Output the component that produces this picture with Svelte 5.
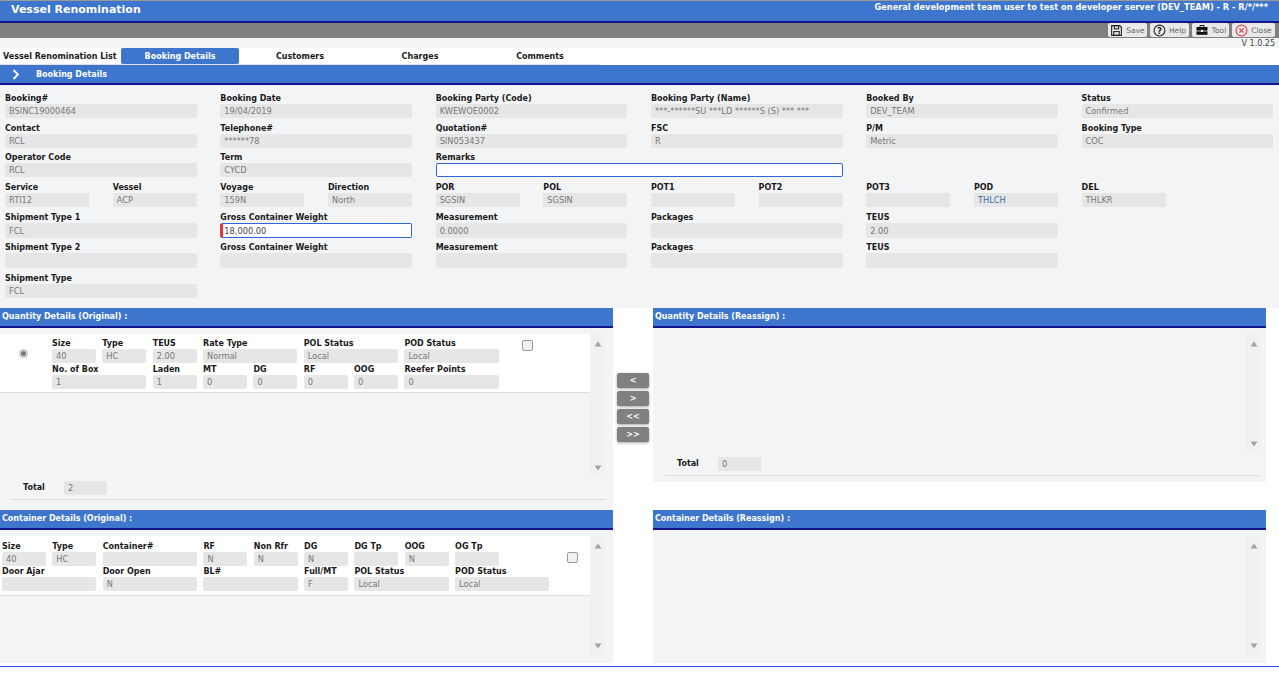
<script>
  const tabs = ['Customers', 'Charges', 'Comments'];
  const rows = [
    [['Booking#','BSINC19000464',2],['Booking Date','19/04/2019',2],['Booking Party (Code)','KWEWOE0002',2],['Booking Party (Name)','***-******SU ***LD ******S (S) *** ***',2],['Booked By','DEV_TEAM',2],['Status','Confirmed',2]],
    [['Contact','RCL',2],['Telephone#','******78',2],['Quotation#','SIN053437',2],['FSC','R',2],['P/M','Metric',2],['Booking Type','COC',2]],
    [['Operator Code','RCL',2],['Term','CYCD',2]],
    [['Service','RTI12',1],['Vessel','ACP',1],['Voyage','159N',1],['Direction','North',1],['POR','SGSIN',1],['POL','SGSIN',1],['POT1','',1],['POT2','',1],['POT3','',1],['POD','THLCH',1],['DEL','THLKR',1]],
  ];
  const lower = [['Shipment Type 2',''],['Gross Container Weight',''],['Measurement',''],['Packages',''],['TEUS','']];
  const qty = [
    ['Size','40',1],['Type','HC',1],['TEUS','2.00',1],['Rate Type','Normal',2],['POL Status','Local',2],['POD Status','Local',2],
    ['No. of Box','1',2],['Laden','1',1],['MT','0',1],['DG','0',1],['RF','0',1],['OOG','0',1],['Reefer Points','0',2],
  ];
  const cont = [
    ['Size','40',1],['Type','HC',1],['Container#','',2],['RF','N',1],['Non Rfr','N',1],['DG','N',1],['DG Tp','',1],['OOG','N',1],['OG Tp','',1],['','',1],
    ['Door Ajar','',2],['Door Open','N',2],['BL#','',2],['Full/MT','F',1],['POL Status','Local',2],['POD Status','Local',2],
  ];
</script>

{#snippet field(label, value, span, cls = '')}
  <div class="field {cls}" style="grid-column: span {span}">
    <span class="lbl">{label}</span>
    <div class="val">{value}</div>
  </div>
{/snippet}

{#snippet scrollbar()}
  <div class="scroll">
    <svg width="8" height="6" viewBox="0 0 8 6"><path d="M4 0.5 L7.5 5.5 H0.5 Z" /></svg>
    <svg width="8" height="6" viewBox="0 0 8 6"><path d="M4 5.5 L7.5 0.5 H0.5 Z" /></svg>
  </div>
{/snippet}

<div class="page">
  <header class="title">
    <h1>Vessel Renomination</h1>
    <span class="user">General development team user to test on developer server (DEV_TEAM) - R - R/*/***</span>
  </header>

  <div class="toolbar">
    <button class="tbtn">
      <svg width="13" height="13" viewBox="0 0 12 12" fill="none" stroke="#222" stroke-width="1"><path d="M1.5 1.5h7.5l1.5 1.5v7.5h-9z"/><rect x="4" y="1.5" width="4" height="3"/><rect x="3.5" y="7" width="5" height="3.5"/></svg>
      Save
    </button>
    <button class="tbtn">
      <svg width="13" height="13" viewBox="0 0 12 12" fill="none" stroke="#222" stroke-width="1"><circle cx="6" cy="6" r="5"/><text x="6" y="9" font-size="8" font-weight="700" text-anchor="middle" fill="#222" stroke="none" font-family="DejaVu Sans">?</text></svg>
      Help
    </button>
    <button class="tbtn tool">
      <svg width="14" height="12" viewBox="0 0 13 12"><path d="M4.5 3V1.5h4V3" fill="none" stroke="#111" stroke-width="1"/><rect x="1" y="3" width="11" height="3.6" fill="#111"/><rect x="1" y="7.4" width="11" height="3.4" fill="#111"/><rect x="5.4" y="5.8" width="2.2" height="2.2" fill="#eee"/></svg>
      Tool
    </button>
    <button class="tbtn close">
      <svg width="13" height="13" viewBox="0 0 12 12" fill="none" stroke="#e2454a" stroke-width="1.1"><circle cx="6" cy="6" r="5"/><path d="M4 4l4 4M8 4l-4 4"/></svg>
      Close
    </button>
  </div>

  <div class="ver">V 1.0.25</div>

  <nav class="tabs">
    <span class="listtab">Vessel Renomination List</span>
    <span class="tab active">Booking Details</span>
    {#each tabs as t}<span class="tab">{t}</span>{/each}
  </nav>

  <div class="bar section">
    <svg width="8" height="11" viewBox="0 0 8 11" fill="none" stroke="#fff" stroke-width="1.8"><path d="M1.5 1l4.5 4.5-4.5 4.5"/></svg>
    <span>Booking Details</span>
  </div>

  <section class="form">
    {#each rows as row, i}
      {#each row as f}
        {@render field(f[0], f[1], f[2], f[0] === 'POD' ? 'blue' : '')}
      {/each}
      {#if i === 2}
        <div class="field remarks">
          <span class="lbl">Remarks</span>
          <div class="val white"></div>
        </div>
        <div class="spacer4"></div>
      {/if}
      {#if i === 3}
        <div></div>
      {/if}
    {/each}

    <div class="field tall two"><span class="lbl">Shipment Type 1</span><div class="val">FCL</div></div>
    <div class="field tall two"><span class="lbl">Gross Container Weight</span><div class="val edit">18,000.00</div></div>
    <div class="field tall two"><span class="lbl">Measurement</span><div class="val">0.0000</div></div>
    <div class="field tall two"><span class="lbl">Packages</span><div class="val"></div></div>
    <div class="field tall two"><span class="lbl">TEUS</span><div class="val">2.00</div></div>
    <div class="two"></div>

    {#each lower as f}
      {@render field(f[0], f[1], 2, 'tall')}
    {/each}
    <div class="two"></div>

    {@render field('Shipment Type', 'FCL', 2)}
  </section>

  <section class="panels">
    <div class="col left">
      <div class="bar sub">Quantity Details (Original) :</div>
      <div class="qbody">
        <div class="listwrap qh">
          <div class="list">
            <div class="item qitem">
              <span class="radio"><i></i></span>
              <div class="igrid q">
                {#each qty as f}{@render field(f[0], f[1], f[2])}{/each}
              </div>
              <span class="check"></span>
            </div>
          </div>
          {@render scrollbar()}
        </div>
        <div class="total"><span class="lbl">Total</span><div class="val">2</div></div>
      </div>
      <div class="bar sub">Container Details (Original) :</div>
      <div class="cbody">
        <div class="listwrap ch">
          <div class="list">
            <div class="item citem">
              <div class="igrid">
                {#each cont as f}
                  {#if f[0]}{@render field(f[0], f[1], f[2])}{:else}<div></div>{/if}
                {/each}
              </div>
              <span class="check"></span>
            </div>
          </div>
          {@render scrollbar()}
        </div>
      </div>
    </div>

    <div class="moves">
      <button>&lt;</button>
      <button>&gt;</button>
      <button>&lt;&lt;</button>
      <button>&gt;&gt;</button>
    </div>

    <div class="col right">
      <div class="bar sub">Quantity Details (Reassign) :</div>
      <div class="qbody r">
        <div class="listwrap rh">
          <div class="list blank"></div>
          {@render scrollbar()}
        </div>
        <div class="total rtotal"><span class="lbl">Total</span><div class="val">0</div></div>
      </div>
      <div class="bar sub gapped2">Container Details (Reassign) :</div>
      <div class="cbody">
        <div class="listwrap ch">
          <div class="list blank"></div>
          {@render scrollbar()}
        </div>
      </div>
    </div>
  </section>

  <div class="endline"></div>
</div>

<style>
  :global(body) { margin: 0; background: #fff; }
  .page {
    width: 1279px; height: 679px; overflow: hidden;
    font-family: "DejaVu Sans", Verdana, sans-serif; font-size: 8px; color: #1a1a1a;
    display: flex; flex-direction: column;
  }
  .title {
    height: 20px; background: #3d76cc; border-top: 1px solid #9a9a9a; border-bottom: 2px solid #14148c;
    display: flex; justify-content: space-between; color: #fff; padding: 0 11px; box-sizing: content-box;
  }
  h1 { margin: 0; font-size: 11px; font-weight: 700; line-height: 18px; }
  .user { font-size: 8.25px; font-weight: 700; line-height: 12px; }
  .toolbar {
    height: 15px; background: #808080; display: flex; justify-content: flex-end; gap: 3px; padding-right: 4px;
  }
  .tbtn {
    all: unset; box-sizing: border-box; height: 14px; width: 39px; background: #e9e9e9; border-radius: 2px;
    display: flex; align-items: center; justify-content: center; gap: 3px; color: #666; font-size: 7.5px;
  }
  .tbtn.tool { width: 37px; }
  .tbtn.close { width: 43px; }
  .ver { height: 10px; background: #f3f4f6; text-align: right; padding-right: 4px; color: #444; font-size: 8px; line-height: 12px; }
  .tabs {
    height: 16px; display: flex; background: #fff; border-bottom: 1px solid #e2e2e2; width: 600px;
    font-weight: 700; line-height: 18px;
  }
  .listtab { width: 121px; padding-left: 3px; box-sizing: border-box; white-space: nowrap; }
  .tab { width: 120px; text-align: center; }
  .tab.active { width: 118px; margin-right: 1px; background: #3d76cc; color: #fff; border-radius: 2px; }
  .bar { background: #3d76cc; color: #fff; font-weight: 700; border-bottom: 2px solid #14148c; }
  .section { height: 18px; display: flex; align-items: center; gap: 16px; padding-left: 12px; }
  .form {
    height: 223px; box-sizing: border-box; background: #f3f4f6; padding: 8px 0 0 5px;
    display: grid; grid-template-columns: repeat(12, 84px); column-gap: 23.67px; row-gap: 4.7px; align-content: start;
  }
  .two { grid-column: span 2; }
  .spacer4 { grid-column: span 4; }
  .field { display: flex; flex-direction: column; min-width: 0; }
  .lbl { height: 11px; line-height: 12px; font-weight: 700; white-space: nowrap; }
  .val {
    height: 14px; background: #e6e6e6; border-radius: 2px; color: #777; padding-left: 4px; line-height: 15px; font-size: 8.25px;
    white-space: nowrap; overflow: hidden; box-sizing: border-box;
  }
  .tall .val { height: 15px; line-height: 16px; }
  .blue .val { color: #3a6ea5; }
  .remarks { grid-column: span 4; }
  .val.white { background: #fff; border: 1px solid #3465d8; }
  .val.edit {
    background: #fff; color: #444; border: 1px solid #3465d8; border-left: 3px solid #e8323c; padding-left: 1px; line-height: 14px;
  }
  .panels { display: flex; height: 359px; background: #fff; }
  .col { width: 613px; flex: none; }
  .sub { height: 18px; line-height: 17px; padding-left: 2px; }
  .qbody { height: 182px; background: #f3f4f6; box-sizing: border-box; padding-top: 6px; }
  .qbody.r { height: 154px; }
  .gapped2 { margin-top: 28px; }
  .cbody { height: 133px; background: #f3f4f6; box-sizing: border-box; padding-top: 6px; }
  .listwrap { display: flex; margin-right: 7px; }
  .qh { height: 144px; }
  .rh { height: 120px; margin-right: 4px; }
  .ch { height: 120px; }
  .right .ch { margin-right: 4px; }
  .list { flex: 1; min-width: 0; }
  .item { background: #fff; border-bottom: 1px solid #e0e0e0; position: relative; display: flex; }
  .qitem { height: 59px; box-sizing: border-box; padding: 4px 0 0 52px; }
  .citem { height: 60px; box-sizing: border-box; padding: 5px 0 0 2px; }
  .igrid { display: grid; grid-template-columns: repeat(11, 44px); column-gap: 6.35px; row-gap: 0; align-content: start; }
  .igrid.q { grid-template-columns: repeat(9, 44px); row-gap: 1px; }
  .radio {
    position: absolute; left: 19px; top: 15px; width: 9px; height: 9px; border-radius: 50%;
    background: #e6e6e6; border: 1px solid #b5b5b5; box-sizing: border-box; display: flex; align-items: center; justify-content: center;
  }
  .radio i { width: 5px; height: 5px; border-radius: 50%; background: #777; }
  .check {
    position: absolute; width: 9px; height: 9px; border: 1px solid #9a9a9a; border-radius: 2px; background: #f0f0f0;
  }
  .qitem .check { left: 522px; top: 6px; }
  .citem .check { left: 567px; top: 16px; }
  .scroll {
    width: 16px; flex: none; background: #f0f1f3; display: flex; flex-direction: column; justify-content: space-between;
    align-items: center; padding: 7px 0; box-sizing: border-box;
  }
  .scroll path { fill: #a3a3a3; }
  .total { display: flex; align-items: center; margin: 3px 7px 0 11px; padding: 0 0 4px 12px; border-bottom: 1px solid #dedede; height: 14px; box-sizing: content-box; }
  .total .lbl { width: 41px; height: 10px; line-height: 10px; }
  .total .val { width: 43px; }
  .rtotal { margin-left: 12px; margin-right: 6px; }
  .moves {
    width: 36px; padding: 65px 0 0 0; display: flex; flex-direction: column; gap: 3px; flex: none; margin-left: 4px;
  }
  .moves button {
    all: unset; width: 32px; height: 15px; background: #808080; color: #fff; border-radius: 2px; text-align: center;
    font-weight: 700; font-size: 8px; line-height: 14px; box-shadow: 0 1px 3px rgba(0, 0, 0, 0.35);
  }
  .endline { height: 1px; background: #2f4df0; margin-top: -1px; }
</style>
